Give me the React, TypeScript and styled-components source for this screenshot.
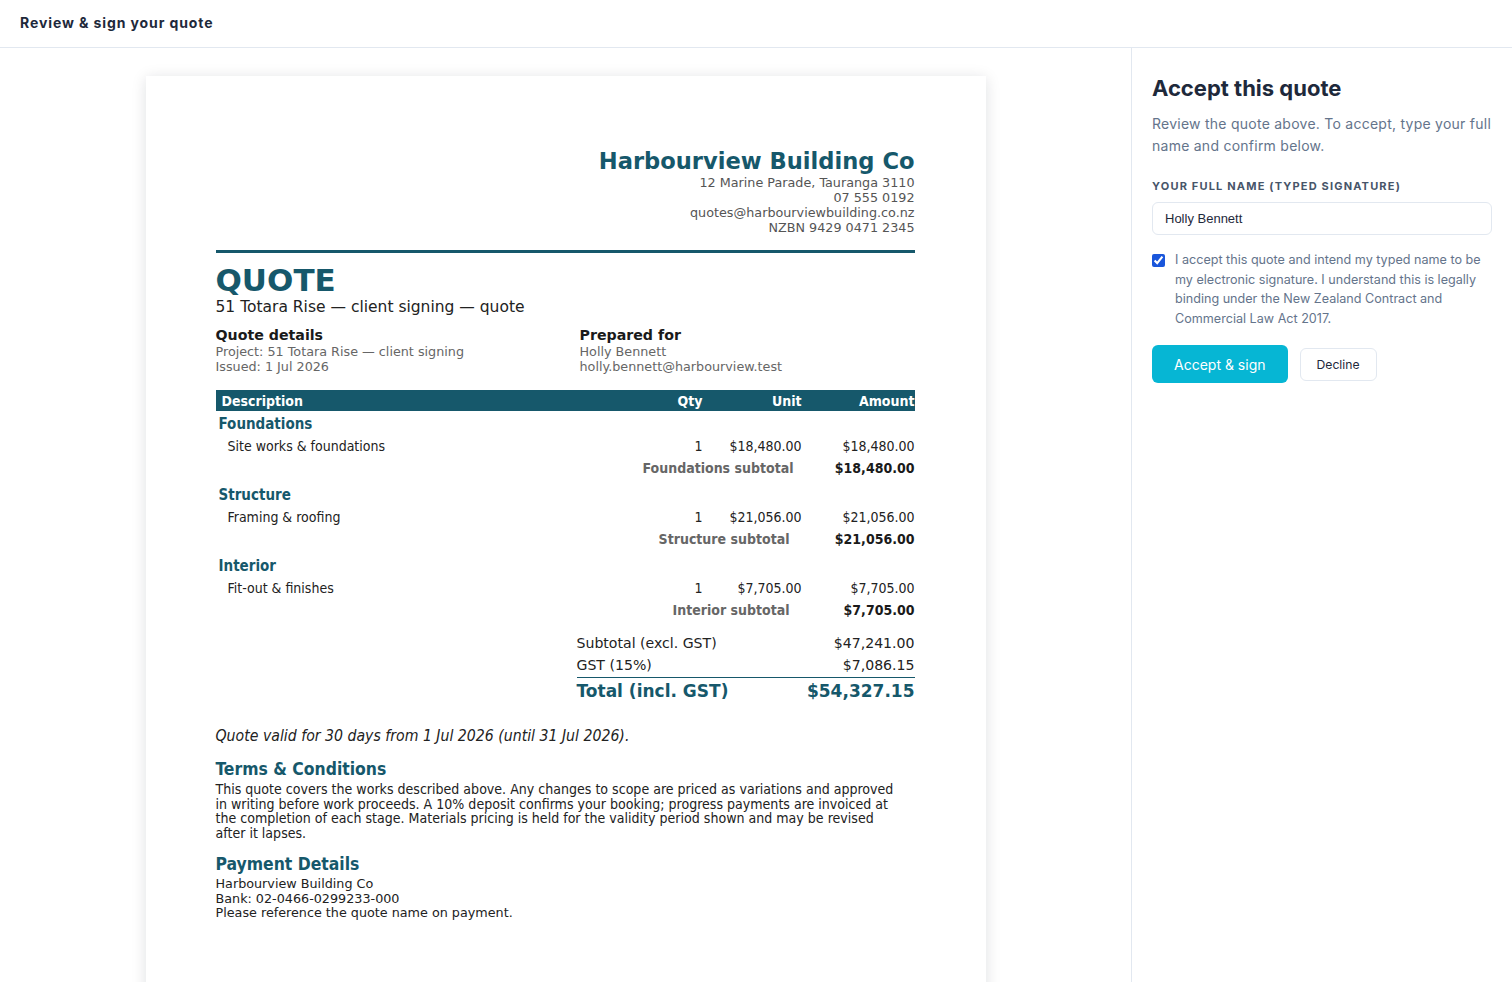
import React from "react";
import styled, { createGlobalStyle } from "styled-components";

const Global = createGlobalStyle`
  html, body { margin: 0; padding: 0; background: #ffffff; }
  body { font-family: Inter, "Liberation Sans", Arial, sans-serif; color: #1e293b; }
  * { box-sizing: border-box; }
`;

const TEAL = "#16586b";
const DOC = `"DejaVu Sans", "Liberation Sans", sans-serif`;
const DOC_C = `"DejaVu Sans Condensed", "DejaVu Sans", sans-serif`;

const Shell = styled.div`
  height: 100vh;
  display: flex;
  flex-direction: column;
  overflow: hidden;
`;

const TopBar = styled.header`
  height: 48px;
  flex: none;
  display: flex;
  align-items: center;
  padding: 0 20px 2px;
  border-bottom: 1px solid #e2e8f0;
`;

const TopTitle = styled.h1`
  margin: 0;
  font-size: 14px;
  font-weight: 700;
  letter-spacing: 0.9px;
  color: #1e293b;
`;

const Body = styled.div`
  flex: 1;
  min-height: 0;
  display: flex;
`;

const Viewer = styled.main`
  flex: 1;
  overflow: hidden;
  display: flex;
  justify-content: center;
  padding-top: 28px;
  border-right: 1px solid #e2e8f0;
`;

const Paper = styled.article`
  width: 840px;
  min-height: 1188px;
  flex: none;
  background: #fff;
  box-shadow: 0 2px 14px rgba(15, 23, 42, 0.13);
  padding: 71px 71px 70px 70px;
  font-family: ${DOC};
  color: #222;
`;

const Letterhead = styled.div`
  text-align: right;
`;

const Company = styled.div`
  font-size: 22.6px;
  line-height: 28px;
  font-weight: 700;
  color: ${TEAL};
`;

const Contact = styled.div`
  font-size: 12.75px;
  line-height: 15px;
  color: #555;
`;

const Rule = styled.div`
  height: 3px;
  background: ${TEAL};
  margin-top: 15px;
`;

const DocTitle = styled.div`
  margin-top: 10px;
  font-size: 31px;
  line-height: 35px;
  font-weight: 700;
  color: ${TEAL};
`;

const Subtitle = styled.div`
  font-size: 15.5px;
  line-height: 19px;
  color: #222;
`;

const InfoGrid = styled.div`
  display: grid;
  grid-template-columns: 364px 1fr;
  margin-top: 10px;
`;

const InfoHead = styled.div`
  font-size: 14.2px;
  line-height: 17px;
  font-weight: 700;
  color: #1a1a1a;
`;

const InfoLine = styled.div`
  font-size: 12.75px;
  line-height: 15px;
  color: #666;
`;

const Items = styled.div`
  margin-top: 16px;
  font-family: ${DOC_C};
  font-stretch: condensed;
`;

const Row = styled.div<{ $h?: number; $gapTop?: number }>`
  display: grid;
  grid-template-columns: 1fr 60px 99px 113px;
  align-items: center;
  height: ${(p) => p.$h ?? 22}px;
  margin-top: ${(p) => p.$gapTop ?? 0}px;
`;

const HeadRow = styled(Row)`
  background: ${TEAL};
  color: #fff;
  font-size: 14px;
  font-weight: 700;
`;

const Cell = styled.div<{ $right?: boolean; $pad?: number; $span?: number }>`
  text-align: ${(p) => (p.$right ? "right" : "left")};
  padding-left: ${(p) => (p.$right ? 0 : p.$pad ?? 0)}px;
  padding-right: ${(p) => (p.$right ? p.$pad ?? 0 : 0)}px;
  grid-column: ${(p) => (p.$span ? `span ${p.$span}` : "auto")};
  white-space: nowrap;
`;

const Section = styled.div`
  font-size: 15px;
  font-weight: 700;
  color: ${TEAL};
  padding-left: 3px;
  grid-column: 1 / -1;
`;

const ItemRow = styled(Row)`
  font-size: 14px;
  color: #222;
`;

const SubRow = styled(Row)`
  font-size: 14px;
  font-weight: 700;
  color: #666;
`;

const SubAmount = styled(Cell)`
  color: #1a1a1a;
`;

const Totals = styled.div`
  margin: 11px 0 0 auto;
  width: 338px;
  font-family: ${DOC};
`;

const TotalLine = styled.div<{ $grand?: boolean }>`
  display: flex;
  justify-content: space-between;
  align-items: center;
  height: ${(p) => (p.$grand ? 26 : 22)}px;
  font-size: ${(p) => (p.$grand ? 17 : 14.1)}px;
  font-weight: ${(p) => (p.$grand ? 700 : 400)};
  color: ${(p) => (p.$grand ? TEAL : "#222")};
  border-top: ${(p) => (p.$grand ? `1.5px solid ${TEAL}` : "none")};
  margin-top: ${(p) => (p.$grand ? 1 : 0)}px;
`;

const Validity = styled.p`
  margin: 24px 0 0;
  font-family: ${DOC_C};
  font-stretch: condensed;
  font-style: italic;
  font-size: 15.7px;
  line-height: 18px;
  color: #222;
`;

const Heading = styled.h2`
  margin: 14px 0 3px;
  font-family: ${DOC_C};
  font-stretch: condensed;
  font-size: 17.4px;
  line-height: 20px;
  font-weight: 700;
  color: ${TEAL};
`;

const Para = styled.p<{ $condensed?: boolean }>`
  margin: 0;
  max-width: ${(p) => (p.$condensed ? "688px" : "none")};
  font-family: ${(p) => (p.$condensed ? DOC_C : DOC)};
  font-stretch: ${(p) => (p.$condensed ? "condensed" : "normal")};
  font-size: ${(p) => (p.$condensed ? 14.05 : 12.75)}px;
  line-height: 14.5px;
  color: #222;
`;

const Side = styled.aside`
  width: 380px;
  flex: none;
  padding: 26px 20px 20px 20px;
`;

const SideTitle = styled.h2`
  margin: 0;
  font-size: 22px;
  line-height: 28px;
  font-weight: 700;
  color: #1e293b;
`;

const SideText = styled.p`
  margin: 11px 0 0;
  font-size: 14px;
  line-height: 22px;
  letter-spacing: 0.25px;
  color: #64748b;
`;

const FieldLabel = styled.label`
  display: block;
  margin-top: 21px;
  font-size: 11px;
  line-height: 16px;
  font-weight: 700;
  letter-spacing: 1.18px;
  text-transform: uppercase;
  color: #475569;
`;

const NameInput = styled.input`
  display: block;
  width: 100%;
  height: 33px;
  margin-top: 8px;
  padding: 0 12px;
  border: 1px solid #e2e8f0;
  border-radius: 6px;
  font-family: "Liberation Sans", Arial, sans-serif;
  font-size: 13px;
  color: #1e293b;
  outline: none;
`;

const Consent = styled.label`
  display: flex;
  gap: 10px;
  margin-top: 15px;
  font-size: 12.6px;
  line-height: 19.5px;
  color: #64748b;
`;

const Check = styled.input`
  width: 13px;
  height: 13px;
  margin: 4px 0 0;
  flex: none;
  accent-color: #1a56db;
`;

const Actions = styled.div`
  display: flex;
  align-items: center;
  gap: 12px;
  margin-top: 17px;
`;

const Primary = styled.button`
  height: 38px;
  padding: 0 22px;
  border: none;
  border-radius: 6px;
  background: #06b6d4;
  color: #fff;
  font-family: inherit;
  font-size: 14px;
  cursor: pointer;
`;

const Secondary = styled.button`
  height: 33px;
  padding: 0 16px;
  border: 1px solid #e2e8f0;
  border-radius: 6px;
  background: #fff;
  color: #1e293b;
  font-family: inherit;
  font-size: 12.2px;
  cursor: pointer;
`;

type Group = { name: string; item: string; unit: string; sub: string };

const groups: Group[] = [
  { name: "Foundations", item: "Site works & foundations", unit: "$18,480.00", sub: "$18,480.00" },
  { name: "Structure", item: "Framing & roofing", unit: "$21,056.00", sub: "$21,056.00" },
  { name: "Interior", item: "Fit-out & finishes", unit: "$7,705.00", sub: "$7,705.00" },
];

export default function App() {
  return (
    <>
      <Global />
      <Shell>
        <TopBar>
          <TopTitle>Review &amp; sign your quote</TopTitle>
        </TopBar>
        <Body>
          <Viewer>
            <Paper>
              <Letterhead>
                <Company>Harbourview Building Co</Company>
                <Contact>12 Marine Parade, Tauranga 3110</Contact>
                <Contact>07 555 0192</Contact>
                <Contact>quotes@harbourviewbuilding.co.nz</Contact>
                <Contact>NZBN 9429 0471 2345</Contact>
              </Letterhead>
              <Rule />
              <DocTitle>QUOTE</DocTitle>
              <Subtitle>51 Totara Rise — client signing — quote</Subtitle>
              <InfoGrid>
                <div>
                  <InfoHead>Quote details</InfoHead>
                  <InfoLine>Project: 51 Totara Rise — client signing</InfoLine>
                  <InfoLine>Issued: 1 Jul 2026</InfoLine>
                </div>
                <div>
                  <InfoHead>Prepared for</InfoHead>
                  <InfoLine>Holly Bennett</InfoLine>
                  <InfoLine>holly.bennett@harbourview.test</InfoLine>
                </div>
              </InfoGrid>

              <Items>
                <HeadRow $h={21}>
                  <Cell $pad={6}>Description</Cell>
                  <Cell $right>Qty</Cell>
                  <Cell $right>Unit</Cell>
                  <Cell $right>Amount</Cell>
                </HeadRow>
                {groups.map((g, i) => (
                  <React.Fragment key={g.name}>
                    <Row $gapTop={i === 0 ? 2 : 5}>
                      <Section>{g.name}</Section>
                    </Row>
                    <ItemRow>
                      <Cell $pad={12}>{g.item}</Cell>
                      <Cell $right>1</Cell>
                      <Cell $right>{g.unit}</Cell>
                      <Cell $right>{g.sub}</Cell>
                    </ItemRow>
                    <SubRow>
                      <Cell />
                      <Cell $right $span={2} $pad={12}>
                        {g.name} subtotal
                      </Cell>
                      <SubAmount $right>{g.sub}</SubAmount>
                    </SubRow>
                  </React.Fragment>
                ))}
              </Items>

              <Totals>
                <TotalLine>
                  <span>Subtotal (excl. GST)</span>
                  <span>$47,241.00</span>
                </TotalLine>
                <TotalLine>
                  <span>GST (15%)</span>
                  <span>$7,086.15</span>
                </TotalLine>
                <TotalLine $grand>
                  <span>Total (incl. GST)</span>
                  <span>$54,327.15</span>
                </TotalLine>
              </Totals>

              <Validity>Quote valid for 30 days from 1 Jul 2026 (until 31 Jul 2026).</Validity>

              <Heading>Terms &amp; Conditions</Heading>
              <Para $condensed>
                This quote covers the works described above. Any changes to scope are priced as
                variations and approved in writing before work proceeds. A 10% deposit confirms your
                booking; progress payments are invoiced at the completion of each stage. Materials
                pricing is held for the validity period shown and may be revised after it lapses.
              </Para>

              <Heading>Payment Details</Heading>
              <Para>Harbourview Building Co</Para>
              <Para>Bank: 02-0466-0299233-000</Para>
              <Para>Please reference the quote name on payment.</Para>
            </Paper>
          </Viewer>

          <Side>
            <SideTitle>Accept this quote</SideTitle>
            <SideText>
              Review the quote above. To accept, type your full name and confirm below.
            </SideText>
            <FieldLabel htmlFor="sig">Your full name (typed signature)</FieldLabel>
            <NameInput id="sig" defaultValue="Holly Bennett" />
            <Consent>
              <Check type="checkbox" defaultChecked />
              <span>
                I accept this quote and intend my typed name to be my electronic signature. I
                understand this is legally binding under the New Zealand Contract and Commercial
                Law Act 2017.
              </span>
            </Consent>
            <Actions>
              <Primary>Accept &amp; sign</Primary>
              <Secondary>Decline</Secondary>
            </Actions>
          </Side>
        </Body>
      </Shell>
    </>
  );
}
